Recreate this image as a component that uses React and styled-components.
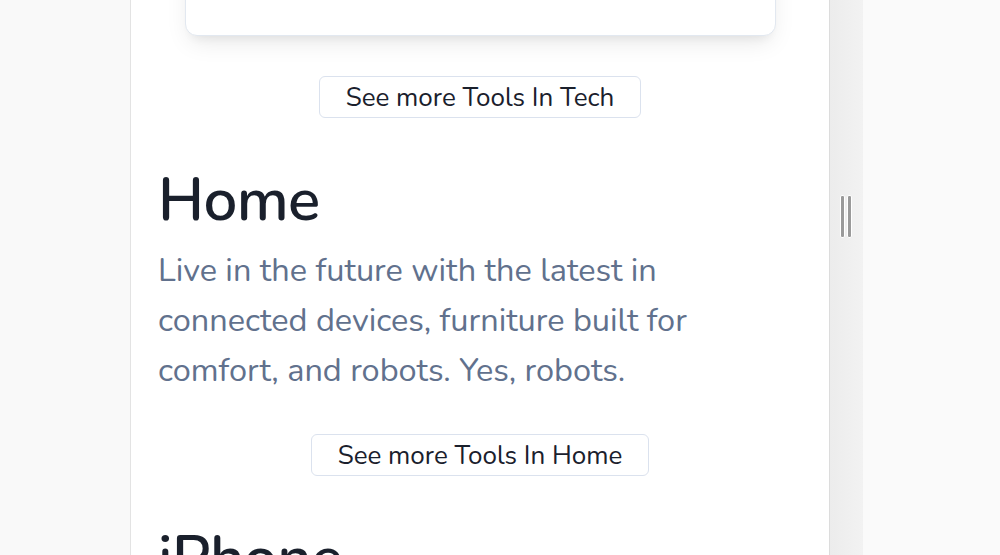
import React from 'react'
import styled, { createGlobalStyle } from 'styled-components'

const Global = createGlobalStyle`
  html, body {
    margin: 0;
    padding: 0;
    background: #fafafa;
    overflow: hidden;
  }
  body {
    font-family: "Nunito", "Lato", "Noto Sans", sans-serif;
  }
`

const sections = [
  {
    title: 'Home',
    text: 'Live in the future with the latest in connected devices, furniture built for comfort, and robots. Yes, robots.',
    button: 'See more Tools In Home',
  },
  {
    title: 'iPhone',
    text: '',
    button: '',
  },
]

function App() {
  return (
    <Page>
      <Global />
      <Gutter />
      <Frame>
        <Card />
        <Center $top={40}>
          <MoreButton>See more Tools In Tech</MoreButton>
        </Center>
        {sections.map((s) => (
          <Section key={s.title}>
            <Title>{s.title}</Title>
            {s.text && <Text>{s.text}</Text>}
            {s.button && (
              <Center $top={39}>
                <MoreButton>{s.button}</MoreButton>
              </Center>
            )}
          </Section>
        ))}
      </Frame>
      <Handle>
        <Grip>
          <span />
          <span />
        </Grip>
      </Handle>
      <Rest />
    </Page>
  )
}

export default App

const Page = styled.div`
  display: flex;
  height: 555px;
  overflow: hidden;
`

const Gutter = styled.div`
  width: 130px;
  flex-shrink: 0;
  background: #f9f9f9;
`

const Frame = styled.div`
  width: 700px;
  flex-shrink: 0;
  box-sizing: border-box;
  background: #fff;
  border-left: 1px solid #e3e3e3;
  border-right: 1px solid #dcdcdc;
  padding: 0 27px;
`

const Card = styled.div`
  margin: -200px 26px 0 27px;
  height: 234px;
  background: #fff;
  border: 1px solid #e2e8f0;
  border-radius: 12px;
  box-shadow: 0 10px 25px -5px rgba(0, 0, 0, 0.1), 0 8px 10px -6px rgba(0, 0, 0, 0.06);
`

const Center = styled.div`
  display: flex;
  justify-content: center;
  margin-top: ${(p) => p.$top}px;
`

const MoreButton = styled.button`
  font-family: "Nunito", "Lato", "Noto Sans", sans-serif;
  font-size: 26px;
  color: #1a202c;
  background: #fff;
  border: 1px solid #dbe2ee;
  border-radius: 6px;
  height: 42px;
  padding: 0 26px;
  cursor: pointer;
`

const Section = styled.section`
  margin-top: 46px;
`

const Title = styled.h2`
  margin: 0;
  font-size: 60px;
  font-weight: 600;
  line-height: 72px;
  color: #1a202c;
  letter-spacing: -0.6px;
`

const Text = styled.p`
  margin: 9px 0 0;
  font-size: 32.5px;
  line-height: 50px;
  color: #61718d;
  max-width: 600px;
`

const Handle = styled.div`
  width: 33px;
  flex-shrink: 0;
  background: linear-gradient(to right, #ececec, #f2f2f2);
  display: flex;
  justify-content: center;
  padding-top: 195px;
  box-sizing: border-box;
`

const Grip = styled.div`
  display: flex;
  gap: 2px;
  height: 43px;
  margin-right: 2px;

  span {
    width: 3px;
    background: #9a9a9a;
    border: 1px solid #fff;
    border-radius: 2px;
  }
`

const Rest = styled.div`
  flex: 1;
  background: #fafafa;
`
